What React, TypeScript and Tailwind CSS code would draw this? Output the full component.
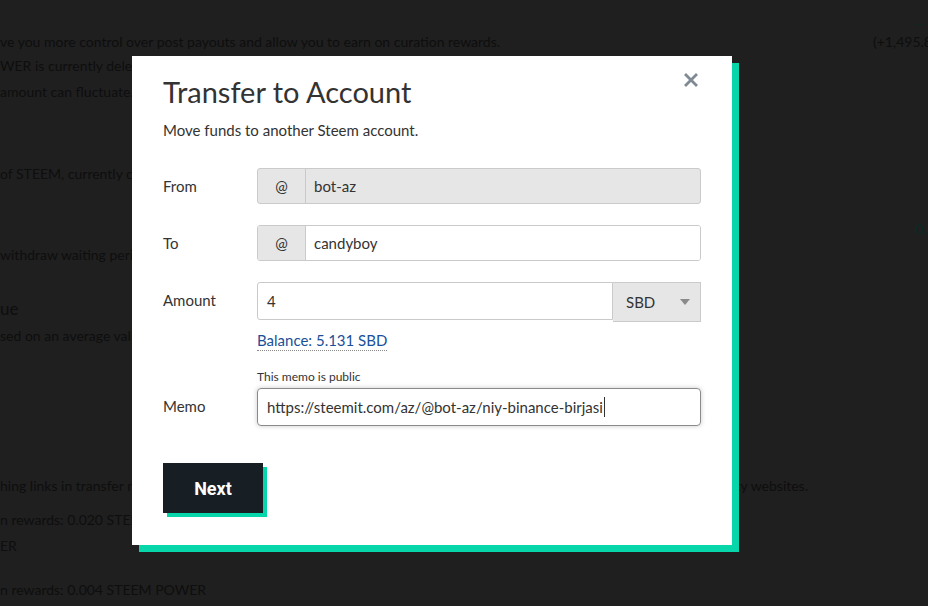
import React from 'react';

const font = { fontFamily: 'Lato, "Noto Sans", sans-serif' };

function BgRow({ top, children, className = '' }: { top: string; children: React.ReactNode; className?: string }) {
  return <div className={`flex items-center h-[20px] ${top} ${className}`}>{children}</div>;
}

function Field({ label, children }: { label: string; children: React.ReactNode }) {
  return (
    <div className="flex items-start">
      <div className="w-[94px] h-[36px] shrink-0 flex items-center text-[15px] text-[#333]">{label}</div>
      <div className="flex-1">{children}</div>
    </div>
  );
}

export default function App() {
  return (
    <div className="relative w-[928px] h-[606px] overflow-hidden bg-[#1f1f1f]" style={font}>
      {/* page behind the overlay */}
      <div className="flex flex-col text-[14px] text-[#0e0e0e] whitespace-nowrap">
        <div className="flex justify-end pr-[4px] h-[10px] mt-[14px] text-[#0b2a24] text-[12px] leading-[10px]">__</div>
        <BgRow top="mt-[7px]" className="justify-between">
          <span>ve you more control over post payouts and allow you to earn on curation rewards.</span>
          <span className="w-[55px] overflow-hidden">(+1,495.8</span>
        </BgRow>
        <BgRow top="mt-[4px]"><span>WER is currently delegated to others</span></BgRow>
        <BgRow top="mt-[6px]"><span>amount can fluctuate.</span></BgRow>
        <BgRow top="mt-[62px]"><span>of STEEM, currently collecting</span></BgRow>
        <BgRow top="mt-[35px]" className="justify-end">
          <span className="text-[#0a2a24] w-[13px] overflow-hidden">0.0</span>
        </BgRow>
        <BgRow top="mt-[6px]"><span>withdraw waiting period</span></BgRow>
        <BgRow top="mt-[35px]"><span className="text-[17px]">ue</span></BgRow>
        <BgRow top="mt-[6px]"><span>sed on an average value</span></BgRow>
        <BgRow top="mt-[130px]" className="w-[808px] justify-between">
          <span>hing links in transfer memos</span>
          <span>ty websites.</span>
        </BgRow>
        <BgRow top="mt-[14px]"><span>n rewards: 0.020 STEEM</span></BgRow>
        <BgRow top="mt-[6px]"><span>ER</span></BgRow>
        <BgRow top="mt-[24px]"><span>n rewards: 0.004 STEEM POWER</span></BgRow>
      </div>

      {/* modal */}
      <div className="absolute left-[132px] top-[56px] w-[600px] h-[489px] bg-white shadow-[7px_7px_0_#06d6a9] px-[31px] pt-[18px]">
        <button className="absolute right-[34px] top-[17px] w-[14px] h-[14px]" aria-label="Close">
          <svg viewBox="0 0 14 14" width="14" height="14">
            <path d="M2 2 L12 12 M12 2 L2 12" stroke="#7f8a94" strokeWidth="2.8" strokeLinecap="square" />
          </svg>
        </button>

        <h2 className="text-[29px] leading-[36px] text-[#333] font-normal">Transfer to Account</h2>
        <p className="mt-[10px] text-[15px] leading-[20px] text-[#333]">Move funds to another Steem account.</p>

        <div className="mt-[28px] flex flex-col gap-[21px]">
          <Field label="From">
            <div className="flex h-[36px] border border-[#cacaca] rounded-[3px] bg-[#e6e6e6] text-[15px] text-[#333]">
              <div className="w-[48px] flex items-center justify-center border-r border-[#cacaca]">@</div>
              <div className="flex items-center pl-[8px]">bot-az</div>
            </div>
          </Field>
          <Field label="To">
            <div className="flex h-[36px] border border-[#cacaca] rounded-[3px] overflow-hidden text-[15px] text-[#333]">
              <div className="w-[48px] flex items-center justify-center border-r border-[#cacaca] bg-[#e6e6e6]">@</div>
              <div className="flex items-center pl-[8px] bg-white flex-1">candyboy</div>
            </div>
          </Field>
          <Field label="Amount">
            <div className="flex items-start text-[15px] text-[#333]">
              <div className="flex-1 h-[38px] flex items-center pl-[9px] border border-[#cacaca] rounded-l-[3px]">4</div>
              <div className="w-[88px] h-[40px] flex items-center justify-between pl-[13px] pr-[10px] bg-[#e6e6e6] border border-l-0 border-[#cacaca]">
                <span>SBD</span>
                <svg viewBox="0 0 10 6" width="10" height="6">
                  <path d="M0 0 L10 0 L5 6 Z" fill="#8a8a8a" />
                </svg>
              </div>
            </div>
          </Field>
        </div>

        <div className="pl-[94px] mt-[8px] flex flex-col items-start">
          <span className="text-[15px] leading-[20px] text-[#1a5099] border-b border-dotted border-[#8a8a8a]">Balance: 5.131 SBD</span>
          <span className="mt-[18px] text-[12px] leading-[16px] text-[#333]">This memo is public</span>
        </div>

        <div className="mt-[3px]">
          <Field label="Memo">
            <div className="h-[38px] flex items-center pl-[9px] border border-[#8a8a8a] rounded-[4px] shadow-[0_0_5px_#cacaca] text-[15px] text-[#333]">
              <span>https://steemit.com/az/@bot-az/niy-binance-birjasi</span>
              <span className="w-px h-[20px] bg-[#333] ml-[1px]" />
            </div>
          </Field>
        </div>

        <button
          className="mt-[37px] w-[100px] h-[50px] bg-[#171f24] text-white text-[18px] font-bold shadow-[4px_4px_0_#06d6a9]"
          style={{ fontFamily: 'Roboto, "Liberation Sans", sans-serif' }}
        >
          Next
        </button>
      </div>
    </div>
  );
}
